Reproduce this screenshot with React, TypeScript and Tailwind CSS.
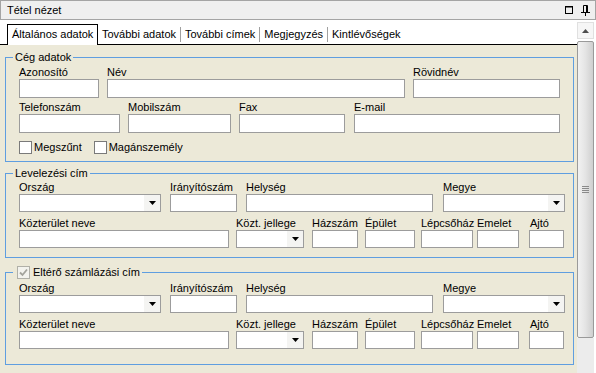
import React from 'react'

type FieldDef = {
  label: string
  w: string
  ml?: string
  select?: boolean
  labelPad?: string
}

const cegRow1: FieldDef[] = [
  { label: 'Azonosító', w: 'w-[80px]' },
  { label: 'Név', w: 'w-[298px]', ml: 'ml-[8px]' },
  { label: 'Rövidnév', w: 'w-[147px]', ml: 'ml-[8px]' },
]

const cegRow2: FieldDef[] = [
  { label: 'Telefonszám', w: 'w-[101px]' },
  { label: 'Mobilszám', w: 'w-[103px]', ml: 'ml-[8px]' },
  { label: 'Fax', w: 'w-[106px]', ml: 'ml-[8px]' },
  { label: 'E-mail', w: 'w-[206px]', ml: 'ml-[9px]' },
]

const addrRow1: FieldDef[] = [
  { label: 'Ország', w: 'w-[142px]', select: true },
  { label: 'Irányítószám', w: 'w-[67px]', ml: 'ml-[9px]' },
  { label: 'Helység', w: 'w-[187px]', ml: 'ml-[9px]' },
  { label: 'Megye', w: 'w-[122px]', ml: 'ml-[10px]', select: true },
]

const addrRow2: FieldDef[] = [
  { label: 'Közterület neve', w: 'w-[210px]' },
  { label: 'Közt. jellege', w: 'w-[68px]', ml: 'ml-[7px]', select: true },
  { label: 'Házszám', w: 'w-[46px]', ml: 'ml-[8px]' },
  { label: 'Épület', w: 'w-[50px]', ml: 'ml-[7px]' },
  { label: 'Lépcsőház', w: 'w-[52px]', ml: 'ml-[6px]' },
  { label: 'Emelet', w: 'w-[42px]', ml: 'ml-[4px]' },
  { label: 'Ajtó', w: 'w-[35px]', ml: 'ml-[10px]', labelPad: 'pl-[1px]' },
]

const tabs = ['További adatok', 'További címek', 'Megjegyzés', 'Kintlévőségek']

const Combo: React.FC<{ h: string }> = ({ h }) => (
  <div className={`flex w-full justify-end border border-[#9c9c9c] bg-white ${h}`}>
    <div className="flex w-[16px] items-center justify-center bg-[#f4f4f2]">
      <svg width="7" height="4" viewBox="0 0 7 4">
        <path d="M0 0H7L3.5 4Z" fill="#000" />
      </svg>
    </div>
  </div>
)

const Field: React.FC<{ f: FieldDef; h: string }> = ({ f, h }) => (
  <div className={`flex flex-col ${f.w} ${f.ml ?? ''}`}>
    <span className={`whitespace-nowrap leading-[14px] ${f.labelPad ?? ''}`}>{f.label}</span>
    {f.select ? (
      <Combo h={h} />
    ) : (
      <input className={`w-full border border-[#9c9c9c] bg-white outline-none ${h}`} />
    )}
  </div>
)

const Row: React.FC<{ fields: FieldDef[]; h: string; className?: string }> = ({
  fields,
  h,
  className,
}) => (
  <div className={`flex ${className ?? ''}`}>
    {fields.map((f) => (
      <Field key={f.label} f={f} h={h} />
    ))}
  </div>
)

const CheckBox: React.FC<{ checked?: boolean }> = ({ checked }) =>
  checked ? (
    <span className="flex h-[13px] w-[13px] items-center justify-center border border-[#b0b0a8] bg-[#f3f3ee]">
      <svg width="9" height="9" viewBox="0 0 9 9">
        <path d="M1 4.5L3.5 7L8 1.5" fill="none" stroke="#a3a39c" strokeWidth="1.8" />
      </svg>
    </span>
  ) : (
    <span className="block h-[13px] w-[13px] border border-[#7a7a7a] bg-white" />
  )

const AddressFields: React.FC = () => (
  <>
    <Row fields={addrRow1} h="h-[18px]" />
    <Row fields={addrRow2} h="h-[18px]" className="mt-[4px]" />
  </>
)

export default function App() {
  return (
    <div
      className="flex h-[373px] w-[596px] flex-col overflow-hidden bg-white text-[11px] text-black"
      style={{ fontFamily: '"Liberation Sans", Arial, sans-serif' }}
    >
      {/* title bar */}
      <div className="flex h-[20px] shrink-0 items-center border border-[#a4a4a4] bg-[#efefef] pl-[6px] pr-[5px]">
        <span>Tétel nézet</span>
        <div className="flex-1" />
        <svg width="8" height="8" viewBox="0 0 8 8" className="mr-[8px]">
          <rect x="0.5" y="0.5" width="7" height="7" fill="none" stroke="#000" />
          <line x1="0" y1="1" x2="8" y2="1" stroke="#000" />
        </svg>
        <svg width="9" height="11" viewBox="0 0 9 11">
          <path d="M2.5 0.5H6.5V7" fill="none" stroke="#000" />
          <path d="M2.5 0.5V7" stroke="#000" />
          <path d="M5.5 0.5V7" stroke="#000" />
          <path d="M0 7.5H9" stroke="#000" />
          <path d="M4.5 8V11" stroke="#000" />
        </svg>
      </div>

      <div className="flex flex-1">
        {/* main */}
        <div className="flex w-[577px] flex-col">
          {/* tab strip */}
          <div className="flex h-[25px] shrink-0 items-end bg-white">
            <div className="h-full w-[7px] border-b border-black" />
            <div className="flex h-[21px] w-[91px] items-center border-x border-t border-black pb-[1px] pl-[4px]">
              Általános adatok
            </div>
            {tabs.map((t, i) => (
              <div key={t} className="flex h-full items-center border-b border-black pt-[4px]">
                <span className="px-[4px]">{t}</span>
                {i < tabs.length - 1 && <span className="h-[15px] w-px bg-[#a0a0a0]" />}
              </div>
            ))}
            <div className="h-full flex-1 border-b border-black" />
          </div>

          {/* content */}
          <div className="flex-1 bg-[#ece9d8] pl-[5px] pt-[5px]">
            <fieldset className="w-[569px] border border-[#5f9ee0] p-0">
              <legend className="ml-[7px] px-[2px] leading-[14px]">Cég adatok</legend>
              <div className="pb-[7px] pl-[13px] pt-[1px]">
                <Row fields={cegRow1} h="h-[19px]" />
                <Row fields={cegRow2} h="h-[19px]" className="mt-[2px]" />
                <div className="mt-[8px] flex h-[13px] items-center">
                  <CheckBox />
                  <span className="ml-[2px] leading-[13px]">Megszűnt</span>
                  <span className="ml-[12px]">
                    <CheckBox />
                  </span>
                  <span className="ml-[2px] leading-[13px]">Magánszemély</span>
                </div>
              </div>
            </fieldset>

            <fieldset className="mt-[4px] w-[569px] border border-[#5f9ee0] p-0">
              <legend className="ml-[7px] px-[2px] leading-[14px]">Levelezési cím</legend>
              <div className="pb-[9px] pl-[13px]">
                <AddressFields />
              </div>
            </fieldset>

            <fieldset className="mt-[7px] w-[569px] border border-[#5f9ee0] p-0">
              <legend className="ml-[7px] flex items-center pl-[4px] pr-[2px] leading-[14px]">
                <CheckBox checked />
                <span className="ml-[3px]">Eltérő számlázási cím</span>
              </legend>
              <div className="pb-[15px] pl-[13px] pt-[2px]">
                <AddressFields />
              </div>
            </fieldset>
          </div>
        </div>

        {/* scrollbar */}
        <div className="flex w-[17px] flex-col bg-white pt-[2px]">
          <div className="flex h-[17px] items-center justify-center border border-[#e0e0e0] bg-[#f6f6f6]">
            <svg width="7" height="4" viewBox="0 0 7 4">
              <path d="M0 4H7L3.5 0Z" fill="#4d4d4d" />
            </svg>
          </div>
          <div className="mt-[2px] flex h-[297px] items-center justify-center rounded-[2px] border border-[#9a9a9a] bg-gradient-to-r from-[#f2f2f2] via-[#e4e4e4] to-[#cfcfcf]">
            <div className="flex w-[7px] flex-col gap-[1px]">
              <span className="h-px bg-[#8a8a8a]" />
              <span className="h-px bg-[#8a8a8a]" />
              <span className="h-px bg-[#8a8a8a]" />
              <span className="h-px bg-[#8a8a8a]" />
            </div>
          </div>
          <div className="flex-1 bg-[#ececec]" />
        </div>
        <div className="w-[2px] bg-white" />
      </div>
    </div>
  )
}
